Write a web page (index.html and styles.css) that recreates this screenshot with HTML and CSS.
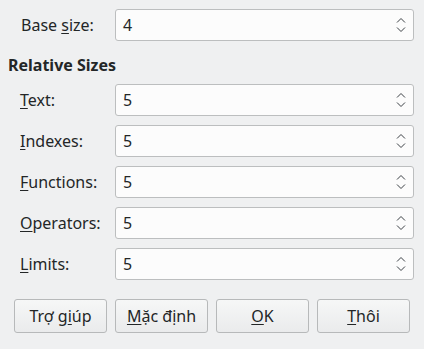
FILE: index.html
```html
<!DOCTYPE html>
<html lang="vi">
<head>
    <meta charset="UTF-8">
    <title>Font Size</title>
    <link rel="stylesheet" href="styles.css">
</head>
<body>
    <div class="dialog">
        <div class="form-row base-row">
            <label class="field-label">Base <u>s</u>ize:</label>
            <div class="spin"><span class="spin-value">4</span><span class="spin-arrows"><svg width="10" height="16" viewBox="0 0 10 16"><path d="M1 5.5 L5 1.5 L9 5.5 M1 10.5 L5 14.5 L9 10.5" fill="none" stroke="#3b4045" stroke-width="1"/></svg></span></div>
        </div>

        <h2 class="section-title">Relative Sizes</h2>

        <div class="form-grid">
            <div class="form-row">
                <label class="field-label"><u>T</u>ext:</label>
                <div class="spin"><span class="spin-value">5</span><span class="spin-arrows"><svg width="10" height="16" viewBox="0 0 10 16"><path d="M1 5.5 L5 1.5 L9 5.5 M1 10.5 L5 14.5 L9 10.5" fill="none" stroke="#3b4045" stroke-width="1"/></svg></span></div>
            </div>
            <div class="form-row">
                <label class="field-label"><u>I</u>ndexes:</label>
                <div class="spin"><span class="spin-value">5</span><span class="spin-arrows"><svg width="10" height="16" viewBox="0 0 10 16"><path d="M1 5.5 L5 1.5 L9 5.5 M1 10.5 L5 14.5 L9 10.5" fill="none" stroke="#3b4045" stroke-width="1"/></svg></span></div>
            </div>
            <div class="form-row">
                <label class="field-label"><u>F</u>unctions:</label>
                <div class="spin"><span class="spin-value">5</span><span class="spin-arrows"><svg width="10" height="16" viewBox="0 0 10 16"><path d="M1 5.5 L5 1.5 L9 5.5 M1 10.5 L5 14.5 L9 10.5" fill="none" stroke="#3b4045" stroke-width="1"/></svg></span></div>
            </div>
            <div class="form-row">
                <label class="field-label"><u>O</u>perators:</label>
                <div class="spin"><span class="spin-value">5</span><span class="spin-arrows"><svg width="10" height="16" viewBox="0 0 10 16"><path d="M1 5.5 L5 1.5 L9 5.5 M1 10.5 L5 14.5 L9 10.5" fill="none" stroke="#3b4045" stroke-width="1"/></svg></span></div>
            </div>
            <div class="form-row">
                <label class="field-label"><u>L</u>imits:</label>
                <div class="spin"><span class="spin-value">5</span><span class="spin-arrows"><svg width="10" height="16" viewBox="0 0 10 16"><path d="M1 5.5 L5 1.5 L9 5.5 M1 10.5 L5 14.5 L9 10.5" fill="none" stroke="#3b4045" stroke-width="1"/></svg></span></div>
            </div>
        </div>

        <div class="button-row">
            <button>Trợ g<u>i</u>úp</button>
            <button><u>M</u>ặc định</button>
            <button><u>O</u>K</button>
            <button><u>T</u>hôi</button>
        </div>
    </div>
</body>
</html>
```

FILE: styles.css
```css
body {
    margin: 0;
    background-color: #eff0f1;
    font-family: 'Noto Sans', sans-serif;
    font-size: 16px;
    color: #232627;
}

.dialog {
    width: 424px;
    height: 349px;
    box-sizing: border-box;
    padding: 9px 10px 0 8px;
}

u {
    text-decoration-thickness: 1px;
    text-underline-offset: 2px;
}

.form-row {
    display: flex;
    align-items: center;
    height: 32px;
}

.field-label {
    width: 107px;
    padding-left: 12px;
    box-sizing: border-box;
    flex-shrink: 0;
}

.base-row .field-label {
    padding-left: 13px;
}

.spin {
    flex: 1;
    height: 32px;
    box-sizing: border-box;
    background-color: #fcfcfc;
    border: 1px solid #bcbebf;
    border-radius: 3px;
    display: flex;
    align-items: center;
    justify-content: space-between;
    padding: 0 7px 0 7px;
}

.spin-arrows {
    display: flex;
    align-items: center;
}

.section-title {
    margin: 0;
    font-size: 16px;
    font-weight: bold;
    height: 43px;
    line-height: 20px;
    padding-top: 14px;
    box-sizing: border-box;
    color: #232627;
}

.form-grid {
    display: flex;
    flex-direction: column;
    gap: 9px;
}

.button-row {
    display: flex;
    gap: 8px;
    margin-top: 19px;
    padding-left: 6px;
}

button {
    width: 93px;
    height: 34px;
    font-family: 'Noto Sans', sans-serif;
    font-size: 16px;
    color: #232627;
    background: linear-gradient(#f6f7f7, #eaebec);
    border: 1px solid #b7b9ba;
    border-radius: 3px;
    padding: 0;
}
```
